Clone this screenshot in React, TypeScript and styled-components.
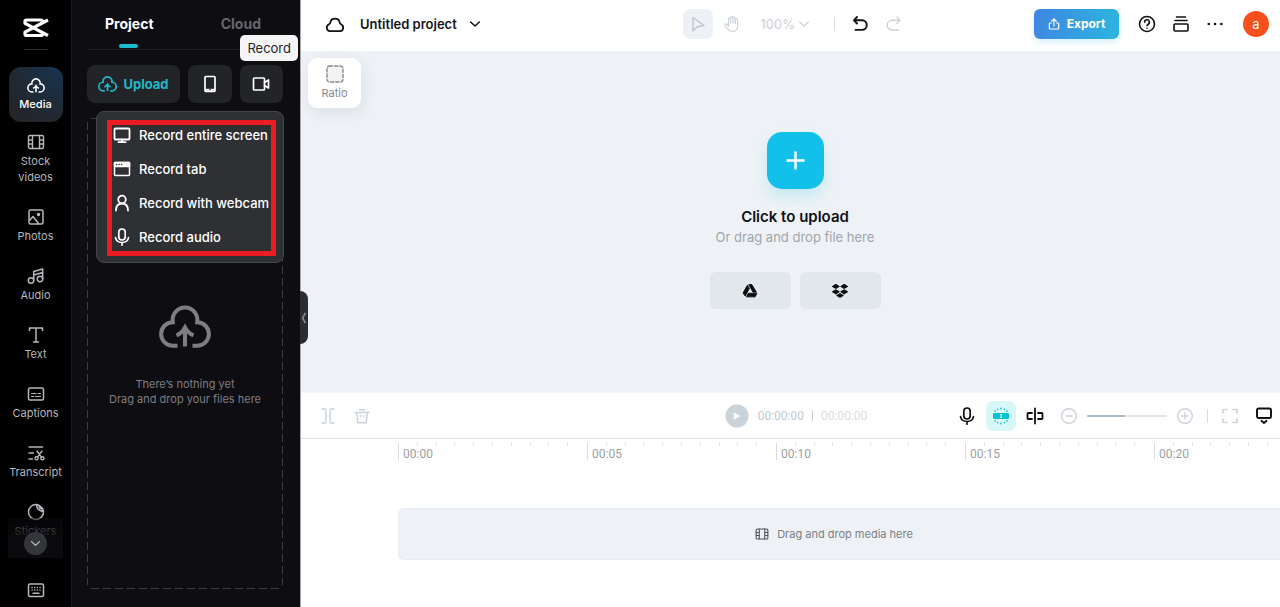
import React from "react";
import styled, { createGlobalStyle, css } from "styled-components";

const GlobalStyle = createGlobalStyle`
  *, *::before, *::after { box-sizing: border-box; }
  body { margin: 0; background: #fff; font-family: Inter, "Liberation Sans", sans-serif; }
  button, select, input { font: inherit; color: inherit; margin: 0; }
  button { border: 0; padding: 0; background: none; cursor: pointer; }
  ul { list-style: none; margin: 0; padding: 0; }
  h1, p { margin: 0; }
  svg { display: block; flex: none; }
`;

/* ---------- icons ---------- */

type IconProps = { size?: number; stroke?: number; children?: React.ReactNode };

const Icon = ({ size = 18, stroke = 1.5, children }: IconProps) => (
  <svg
    width={size}
    height={size}
    viewBox="0 0 18 18"
    fill="none"
    stroke="currentColor"
    strokeWidth={stroke}
    strokeLinecap="round"
    strokeLinejoin="round"
    aria-hidden="true"
  >
    {children}
  </svg>
);

const CloudUpload = ({ width, stroke }: { width: number; stroke: number }) => (
  <svg
    width={width}
    height={Math.round((width * 44) / 52)}
    viewBox="0 0 52 44"
    fill="none"
    stroke="currentColor"
    strokeWidth={stroke}
    aria-hidden="true"
  >
    <path d="M18.5 40.8H14A11.8 11.8 0 0 1 13.8 17.2A12.4 12.4 0 1 1 38.2 17.2A11.8 11.8 0 0 1 38 40.8H33.5" />
    <path d="M26 41.500V23M17.500 30.500Q23 28 26 22.500Q29 28 34.500 30.500" />
  </svg>
);

const Logo = () => (
  <svg width="26" height="20" viewBox="0 0 26 20" fill="none" stroke="#fff" strokeWidth="3.200" strokeLinejoin="round" aria-hidden="true">
    <path d="M19.500 5.500V3.500Q19.500 2 18 2H3.500Q2 2 2 3.500V5.300L25 17.500" />
    <path d="M19.500 14V16Q19.500 17.500 18 17.500H3.500Q2 17.500 2 16V14.200L25 2" />
  </svg>
);

const Film = ({ size = 18 }: { size?: number }) => (
  <Icon size={size} stroke={1.4}>
    <rect x="1.500" y="2.500" width="15" height="13" rx="1.500" />
    <path d="M5.500 2.500v13M12.500 2.500v13M1.500 7h4M1.500 11h4M12.500 7h4M12.500 11h4" />
  </Icon>
);
const Photo = () => (
  <Icon>
    <rect x="2" y="2" width="14" height="14" rx="1.500" />
    <path d="M2.500 12.500L6 8.500L11.500 15.500" />
    <circle cx="11.500" cy="6.500" r="1" fill="currentColor" />
  </Icon>
);
const Music = () => (
  <Icon>
    <circle cx="4" cy="13.500" r="2.700" />
    <circle cx="13" cy="12" r="2.700" />
    <path d="M6.700 13.500V4.500L15.700 2V12M6.700 8L15.700 5.500" />
  </Icon>
);
const TextIcon = () => (
  <Icon>
    <path d="M2.500 4.500V2H15.500V4.500M9 2V16M6.500 16H11.500" />
  </Icon>
);
const CaptionsIcon = () => (
  <Icon>
    <rect x="1.500" y="3" width="15" height="12" rx="1.500" />
    <path d="M4.500 8.500h4.500M11 8.500h2.500M4.500 11.500h2M8.500 11.500h5" strokeWidth="1.200" />
  </Icon>
);
const TranscriptIcon = () => (
  <Icon stroke={1.4}>
    <path d="M2 3H15.500M2 9H6.500M2 15H5.500M10 7L14.500 13.200M15 7L10.500 13.200" />
    <circle cx="9.600" cy="14.300" r="1.600" />
    <circle cx="15.400" cy="14.300" r="1.600" />
  </Icon>
);
const Sticker = () => (
  <Icon>
    <path d="M9.500 1.500A7.500 7.500 0 1 0 16.500 8.500Q16 5 13 3Q11.500 1.800 9.500 1.500ZM9.500 1.500Q9.500 7.500 16.500 8.500M12 2.500Q12 5.500 15.500 6" />
  </Icon>
);
const Keyboard = () => (
  <Icon>
    <rect x="1.500" y="3" width="15" height="12.500" rx="1.500" />
    <path d="M5 6.500h.2M7.700 6.500h.2M10.300 6.500h.2M13 6.500h.1M5 9h.2M7.700 9h.2M10.300 9h.2M13 9h.1M6 12.200h6" strokeWidth="1.400" />
  </Icon>
);
const Phone = () => (
  <Icon stroke={1.7}>
    <rect x="4" y="1.500" width="10" height="15" rx="1" />
    <path d="M4 13.800h10v2H4z" fill="currentColor" stroke="none" />
    <path d="M8.500 14.300h1" stroke="#232428" strokeWidth="1" />
  </Icon>
);
const Camera = () => (
  <Icon stroke={1.7}>
    <rect x="1.500" y="3" width="11" height="12" rx="1" />
    <path d="M12.500 7.500L16.500 5V13L12.500 10.500" />
  </Icon>
);
const Monitor = () => (
  <Icon stroke={1.8}>
    <rect x="1.500" y="2.500" width="15" height="11" rx="1" />
    <path d="M9 13.500V16M5.500 16.200H12.500" />
  </Icon>
);
const TabIcon = () => (
  <Icon>
    <rect x="1.500" y="2.500" width="15" height="13" rx="1" />
    <path d="M1.500 2.500h15v4h-15z" fill="currentColor" />
    <path d="M3.500 4.500h.2M6 4.500h.2M8.500 4.500h.2" stroke="#2f3034" strokeWidth="1.400" />
  </Icon>
);
const Person = () => (
  <Icon stroke={1.8}>
    <circle cx="9" cy="5.500" r="3.800" />
    <path d="M3 16.500C3 11.500 5.500 9.500 9 9.500S15 11.500 15 16.500" />
  </Icon>
);
const Mic = () => (
  <Icon stroke={1.7}>
    <rect x="5.800" y="1" width="6.400" height="11" rx="3.200" />
    <path d="M2.500 9.500C3 13 5.500 14.500 9 14.500S15 13 15.500 9.500M9 14.500V17.200" />
  </Icon>
);
const Chevron = ({ size = 12, stroke = 2 }: { size?: number; stroke?: number }) => (
  <Icon size={size} stroke={stroke}>
    <path d="M2.500 6L9 12L15.500 6" />
  </Icon>
);
const CloudIcon = () => (
  <Icon size={20} stroke={1.6}>
    <path d="M4.500 15.500A3.300 3.300 0 0 1 3.600 9.200Q4.600 8.800 4.800 7.500A4.300 4.300 0 0 1 13.200 7.500Q13.400 8.800 14.400 9.200A3.300 3.300 0 0 1 13.500 15.500Z" />
  </Icon>
);
const Cursor = () => (
  <Icon stroke={1.4}>
    <path d="M4 2.500V16L8 12L15 10.500Z" />
  </Icon>
);
const Hand = () => (
  <Icon stroke={1.2}>
    <path d="M5.500 10.500V4.200a1.100 1.100 0 0 1 2.200 0V8M7.700 8V2.700a1.100 1.100 0 0 1 2.300 0V8M10 8V3.200a1.100 1.100 0 0 1 2.300 0V8.500M12.300 8.500V5a1.100 1.100 0 0 1 2.300 0V11C14.600 14.500 12.500 16.500 9.500 16.500C7 16.500 5.800 15.500 4.500 13.800L2 10.500C1.300 9.300 2.800 8.300 3.800 9.200L5.500 11" />
  </Icon>
);
const Undo = () => (
  <Icon stroke={1.9}>
    <path d="M6 2L3 5.300L6 8.500M3.500 5.300H11A4.800 4.800 0 0 1 11 14.900H4.500" />
  </Icon>
);
const Redo = () => (
  <Icon stroke={1.5}>
    <path d="M12 2L15 5.300L12 8.500M14.500 5.300H7A4.800 4.800 0 0 0 7 14.900H13.500" />
  </Icon>
);
const Share = () => (
  <Icon size={12} stroke={1.8}>
    <path d="M5 7.500H3Q2 7.500 2 8.500V15.500Q2 16.500 3 16.500H15Q16 16.500 16 15.500V8.500Q16 7.500 15 7.500H13M9 12V1.500M5.500 4.800L9 1.500L12.500 4.800" />
  </Icon>
);
const Help = () => (
  <Icon stroke={1.6}>
    <circle cx="9" cy="9" r="7.500" />
    <path d="M6.600 7.200A2.400 2.400 0 1 1 10.200 9.200Q9 9.800 9 10.800M9 13.200v.1" />
  </Icon>
);
const Stack = () => (
  <Icon stroke={1.6}>
    <path d="M4.500 2H13.500M3 5.500H15" />
    <rect x="2" y="9" width="14" height="7" rx="1" />
  </Icon>
);
const Dots = () => (
  <Icon>
    <path d="M2.700 9h.1M9 9h.1M15.300 9h.1" strokeWidth="2.400" />
  </Icon>
);
const Ratio = () => (
  <Icon stroke={1.4}>
    <rect x="1" y="1" width="16" height="16" rx="2.500" fill="#f1f3f5" strokeDasharray="3.200 2" />
  </Icon>
);
const Plus = () => (
  <svg width="19" height="19" viewBox="0 0 20 20" stroke="#fff" strokeWidth="2.600" aria-hidden="true">
    <path d="M10 .5V19.500M.5 10H19.500" />
  </svg>
);
const Drive = () => (
  <svg width="16" height="16" viewBox="0 0 18 18" fill="#0b0c0f" stroke="#0b0c0f" strokeWidth="1" strokeLinejoin="round" aria-hidden="true">
    <path d="M6 2.500L8.200 6.200L3.600 14.700L1.200 11.200Z" />
    <path d="M7.500 1.800H11L16.200 10.300H12.400Z" />
    <path d="M7 11.600H16.700L14.800 15.600H5Z" />
  </svg>
);
const Dropbox = () => (
  <svg width="18" height="16" viewBox="0 0 18 16" fill="#0b0c0f" aria-hidden="true">
    <path d="M4.800 .8L9 3.400L4.800 6L.6 3.400ZM13.200 .8L17.400 3.400L13.200 6L9 3.400ZM4.800 6.200L9 8.800L4.800 11.400L.6 8.800ZM13.200 6.200L17.400 8.800L13.200 11.400L9 8.800ZM9 9.900L13 12.400L9 15L5 12.400Z" />
  </svg>
);
const SplitBrackets = () => (
  <Icon stroke={1.5}>
    <path d="M3 2H5.500Q7 2 7 3.500V14.500Q7 16 5.500 16H3M15 2H12.500Q11 2 11 3.500V14.500Q11 16 12.500 16H15" />
  </Icon>
);
const Trash = () => (
  <Icon stroke={1.5}>
    <path d="M2 5.500H16M6.500 2.800H11.500M3.800 6L4.800 15.800H13.200L14.200 6M7.500 8.500V9.500M10.500 8.500V9.500" />
  </Icon>
);
const PlayIcon = () => (
  <svg width="24" height="24" viewBox="0 0 24 24" aria-hidden="true">
    <circle cx="12" cy="12" r="11.500" fill="#cad2da" />
    <path d="M9.200 9L14.800 12L9.200 15Z" fill="#fff" stroke="#fff" strokeLinejoin="round" />
  </svg>
);
const Snap = () => (
  <Icon stroke={1.4}>
    <rect x="1" y="6" width="16" height="6" rx="1" fill="currentColor" stroke="none" />
    <path d="M9 7.500v3M8.300 7.500h1.400M8.300 10.500h1.400" stroke="#d8f7f8" strokeWidth="1" />
    <path d="M9 1.300v.5M5.600 2.200l.2.400M12.400 2.200l-.2.400M3 4l.2.200M15 4l-.2.200M9 16.700v-.5M5.600 15.800l.2-.4M12.400 15.800l-.2-.4M3 14l.2-.2M15 14l-.2-.2" />
  </Icon>
);
const SplitClip = () => (
  <Icon stroke={1.8}>
    <path d="M9 1.500V16.500M6 6H2.200Q1.500 6 1.500 6.700V11.300Q1.500 12 2.200 12H6M12 6H15.800Q16.500 6 16.500 6.700V11.300Q16.500 12 15.800 12H12" />
  </Icon>
);
const ZoomOut = () => (
  <Icon stroke={1.4}>
    <circle cx="9" cy="9" r="7.300" />
    <path d="M6 9H12" />
  </Icon>
);
const ZoomIn = () => (
  <Icon stroke={1.4}>
    <circle cx="9" cy="9" r="7.300" />
    <path d="M6 9H12M9 6V12" />
  </Icon>
);
const Fullscreen = () => (
  <Icon stroke={1.6}>
    <path d="M2 6V2.500H6M12 2.500H16V6M16 12V15.500H12M6 15.500H2V12" />
  </Icon>
);
const Dock = () => (
  <Icon stroke={1.9}>
    <rect x="2" y="1.500" width="14" height="9.500" rx="1.500" />
    <path d="M6.500 13.800L9 16L11.500 13.800" />
  </Icon>
);

/* ---------- page ---------- */

const Page = styled.div`
  display: flex;
  height: 100vh;
  min-height: 560px;
  overflow: hidden;
`;

/* ---------- side navigation ---------- */

const Nav = styled.nav`
  flex: none;
  width: 72px;
  display: flex;
  flex-direction: column;
  align-items: center;
  background: #000;
  border-right: 1px solid #1c1c20;
`;
const Brand = styled.a`
  display: flex;
  justify-content: center;
  width: 24px;
  height: 50px;
  padding-top: 18px;
  border-bottom: 1px solid #2a2a2e;
`;
const NavList = styled.ul`
  position: relative;
  flex: 1;
  width: 100%;
  min-height: 0;
  overflow: hidden;
  padding-top: 17px;
  display: flex;
  flex-direction: column;
  align-items: center;
  gap: 23px;
`;
const NavButton = styled.button<{ $active?: boolean }>`
  display: flex;
  flex-direction: column;
  align-items: center;
  gap: 2px;
  width: 64px;
  font-size: 11px;
  line-height: 16px;
  color: #b4b7bb;
  ${(p) =>
    p.$active &&
    css`
      gap: 3px;
      width: 54px;
      height: 55px;
      padding-top: 11px;
      margin-bottom: -12px;
      border-radius: 12px;
      color: #fff;
      font-weight: 500;
      background: radial-gradient(circle at 100% 0, #173450 0%, #232528 85%);
    `}
`;
const NavLabel = styled.span`
  max-width: 56px;
`;
const NavMore = styled.div`
  position: absolute;
  left: 8px;
  right: 8px;
  bottom: 0;
  height: 40px;
  display: flex;
  justify-content: center;
  align-items: flex-end;
  padding-bottom: 3px;
  background: linear-gradient(rgba(10, 10, 14, 0.5), #0b0b0f 60%);
`;
const MoreButton = styled.button`
  display: grid;
  place-items: center;
  width: 23px;
  height: 23px;
  border-radius: 50%;
  background: #35363a;
  color: #c3c5c8;
`;
const NavFooter = styled.button`
  flex: none;
  display: grid;
  place-items: center;
  width: 100%;
  height: 49px;
  padding-top: 14px;
  color: #b4b7bb;
`;

/* ---------- media panel ---------- */

const Panel = styled.aside`
  position: relative;
  flex: none;
  width: 229px;
  display: flex;
  flex-direction: column;
  padding: 0 17px 18px 15px;
  background: #0e0d12;
  border-right: 1px solid #a9a9ae;
`;
const Tabs = styled.div`
  flex: none;
  display: flex;
  justify-content: space-between;
  height: 50px;
  padding: 0 22px 0 18px;
  border-bottom: 1px solid #222227;
`;
const Tab = styled.button<{ $active?: boolean }>`
  position: relative;
  height: 48px;
  font-size: 14px;
  line-height: 20px;
  font-weight: 700;
  color: ${(p) => (p.$active ? "#fff" : "#66666b")};
  ${(p) =>
    p.$active &&
    css`
      &::after {
        content: "";
        position: absolute;
        left: calc(50% - 10px);
        bottom: 0;
        width: 19px;
        height: 4px;
        border-radius: 2px;
        background: #1bbcd0;
      }
    `}
`;
const Actions = styled.div`
  position: relative;
  flex: none;
  display: flex;
  gap: 8px;
  margin-top: 15px;
`;
const Action = styled.button<{ $wide?: boolean }>`
  flex: ${(p) => (p.$wide ? "none" : "1")};
  display: flex;
  align-items: center;
  justify-content: center;
  gap: 6px;
  width: ${(p) => (p.$wide ? "93px" : "auto")};
  height: 38px;
  border-radius: 8px;
  background: #232428;
  font-size: 13px;
  font-weight: 700;
  color: ${(p) => (p.$wide ? "#1fb9c9" : "#fff")};
`;
const Tooltip = styled.div`
  position: absolute;
  z-index: 3;
  right: -15px;
  bottom: calc(100% + 4px);
  padding: 4px 7px;
  border-radius: 5px;
  background: #f5f5f5;
  color: #232428;
  font-size: 13px;
  line-height: 18px;
`;
const Menu = styled.div`
  position: absolute;
  z-index: 2;
  top: calc(100% + 8px);
  right: -1px;
  width: 188px;
  padding: 8px 7px 6px 10px;
  border: 1px solid #45464b;
  border-radius: 8px;
  background: #2f3034;
`;
const MenuList = styled.ul`
  display: flex;
  flex-direction: column;
  gap: 14px;
  padding: 0 0 4px 1px;
  border: 5px solid #ec1c24;
`;
const MenuItem = styled.button`
  display: flex;
  align-items: center;
  gap: 8px;
  height: 20px;
  font-size: 13px;
  font-weight: 500;
  white-space: nowrap;
  color: #fff;
`;
const DropZone = styled.div`
  --dash: #3b3b40;
  flex: 1;
  display: flex;
  flex-direction: column;
  align-items: center;
  justify-content: center;
  gap: 28px;
  margin-top: 15px;
  padding-top: 4px;
  background-image: repeating-linear-gradient(90deg, var(--dash) 0 8px, transparent 8px 12px),
    repeating-linear-gradient(90deg, var(--dash) 0 8px, transparent 8px 12px),
    repeating-linear-gradient(var(--dash) 0 8px, transparent 8px 12px),
    repeating-linear-gradient(var(--dash) 0 8px, transparent 8px 12px);
  background-size: calc(100% - 8px) 1px, calc(100% - 8px) 1px, 1px calc(100% - 8px), 1px calc(100% - 8px);
  background-position: center top, center bottom, left center, right center;
  background-repeat: no-repeat;
  color: #7e7d82;
  font-size: 11px;
  line-height: 15px;
  text-align: center;
`;
const CollapseHandle = styled.button`
  position: absolute;
  z-index: 2;
  top: 48%;
  left: 100%;
  width: 8px;
  height: 53px;
  display: grid;
  place-items: center;
  border-radius: 0 8px 8px 0;
  background: #2b2d30;
  color: #8a8d91;
`;

/* ---------- workspace ---------- */

const Main = styled.main`
  flex: 1;
  min-width: 0;
  display: flex;
  flex-direction: column;
  background: #fff;
`;
const Bar = styled.header<{ $timeline?: boolean }>`
  flex: none;
  display: grid;
  grid-template-columns: 1fr auto 1fr;
  align-items: center;
  height: ${(p) => (p.$timeline ? "46px" : "51px")};
  padding: ${(p) => (p.$timeline ? "0 1px 0 12px" : "0 11px 4px 21px")};
  border-bottom: ${(p) => (p.$timeline ? "1px solid #dfe2e5" : "0")};
`;
const Group = styled.div<{ $gap?: number; $end?: boolean }>`
  display: flex;
  align-items: center;
  gap: ${(p) => p.$gap ?? 4}px;
  justify-content: ${(p) => (p.$end ? "flex-end" : "flex-start")};
`;
const IconButton = styled.button<{ $tone?: "muted" | "snap" | "selected"; $width?: number }>`
  display: grid;
  place-items: center;
  width: ${(p) => p.$width ?? 30}px;
  height: 30px;
  border-radius: 7px;
  color: #0f1014;
  ${(p) => p.$tone === "muted" && "color: #ccd2d9;"}
  ${(p) => p.$tone === "selected" && "color: #bfc5cc; background: #edf1f5;"}
  ${(p) => p.$tone === "snap" && "color: #08c3d4; background: #d8f7f8;"}
`;
const ProjectTitle = styled.button`
  display: flex;
  align-items: center;
  gap: 12px;
  font-size: 13px;
  font-weight: 600;
  color: #14151a;
`;
const ZoomSelect = styled.label`
  position: relative;
  display: flex;
  align-items: center;
  margin: 0 14px 0 10px;
  color: #ccd0d5;
  svg {
    position: absolute;
    right: 0;
    pointer-events: none;
  }
`;
const Select = styled.select`
  appearance: none;
  width: 49px;
  padding: 0;
  border: 0;
  background: none;
  font-size: 13px;
`;
const Divider = styled.span<{ $space: number }>`
  width: 1px;
  height: 14px;
  margin: 0 ${(p) => p.$space}px;
  background: #d9dde1;
`;
const ExportButton = styled.button`
  display: flex;
  align-items: center;
  justify-content: center;
  gap: 7px;
  width: 85px;
  height: 30px;
  border-radius: 6px;
  background: linear-gradient(100deg, #3f86e3, #2bb6dd);
  box-shadow: 0 3px 6px rgba(43, 182, 221, 0.2);
  color: #fff;
  font-size: 12px;
  font-weight: 700;
`;
const Avatar = styled.button`
  width: 26px;
  height: 26px;
  border-radius: 50%;
  background: #f8501c;
  color: #fff;
  font-size: 13px;
`;

const Stage = styled.section`
  position: relative;
  flex: 1;
  display: flex;
  flex-direction: column;
  align-items: center;
  justify-content: center;
  padding: 0 0 2px 9px;
  background: #eef2f6;
`;
const RatioButton = styled.button`
  position: absolute;
  top: 7px;
  left: 7px;
  width: 53px;
  height: 50px;
  display: flex;
  flex-direction: column;
  align-items: center;
  gap: 2px;
  padding-top: 7px;
  border-radius: 9px;
  background: #fff;
  box-shadow: 2px 4px 14px rgba(60, 70, 90, 0.1);
  color: #85888e;
  font-size: 11px;
  line-height: 16px;
`;
const AddButton = styled.button`
  display: grid;
  place-items: center;
  width: 57px;
  height: 57px;
  margin-bottom: 18px;
  border-radius: 15px;
  background: #13c0ea;
  box-shadow: 0 8px 14px rgba(19, 192, 234, 0.18);
`;
const StageTitle = styled.h1`
  font-size: 15px;
  line-height: 20px;
  font-weight: 600;
  color: #0f1014;
`;
const StageText = styled.p`
  font-size: 13px;
  line-height: 20px;
  color: #a0a5ac;
`;
const Sources = styled.div`
  display: flex;
  gap: 9px;
  margin-top: 25px;
`;
const Source = styled.button`
  display: grid;
  place-items: center;
  width: 81px;
  height: 37px;
  border-radius: 6px;
  background: #e1e7ea;
`;

/* ---------- timeline ---------- */

const Timeline = styled.section`
  flex: none;
  border-top: 1px solid #f4f6f8;
`;
const PlayButton = styled.button`
  margin-right: 5px;
`;
const Time = styled.span<{ $faint?: boolean }>`
  font-family: Roboto, "Liberation Sans", sans-serif;
  font-size: 12px;
  color: ${(p) => (p.$faint ? "#d9dde2" : "#c3cad2")};
`;
const TimeDivider = styled.span`
  width: 1px;
  height: 11px;
  margin: 0 4px;
  background: #c3cad2;
`;
const Slider = styled.input`
  appearance: none;
  width: 80px;
  height: 2px;
  margin: 0 -1px;
  border-radius: 1px;
  background: linear-gradient(90deg, #a9bcc6 48%, #e1e5e9 48%);
  &::-webkit-slider-thumb {
    appearance: none;
    width: 0;
    height: 0;
  }
`;
const Ruler = styled.div`
  display: flex;
  height: 69px;
  padding: 4px 0 0 97px;
  overflow: hidden;
`;
const Second = styled.div`
  position: relative;
  flex: none;
  display: grid;
  grid-template-columns: repeat(10, 1fr);
  width: 189px;
  height: 17px;
  border-left: 1px solid #d9dce0;
`;
const Tick = styled.i`
  height: 3px;
  border-right: 1px solid #dde1e5;
`;
const SecondLabel = styled.span`
  position: absolute;
  left: 4px;
  top: 4px;
  font-family: Roboto, "Liberation Sans", sans-serif;
  font-size: 12px;
  line-height: 14px;
  color: #9b9fa5;
`;
const Track = styled.div`
  display: flex;
  align-items: center;
  justify-content: center;
  gap: 8px;
  height: 52px;
  margin: 0 0 47px 97px;
  padding-right: 11px;
  border: 1px solid #e8ecef;
  border-right: 0;
  border-radius: 6px 0 0 6px;
  background: #eef1f5;
  font-size: 11px;
  color: #7c7f85;
  svg {
    color: #505359;
  }
`;

const navItems: { label: string; icon: React.ReactNode; active?: boolean }[] = [
  { label: "Media", icon: <CloudUpload width={18} stroke={4.6} />, active: true },
  { label: "Stock videos", icon: <Film /> },
  { label: "Photos", icon: <Photo /> },
  { label: "Audio", icon: <Music /> },
  { label: "Text", icon: <TextIcon /> },
  { label: "Captions", icon: <CaptionsIcon /> },
  { label: "Transcript", icon: <TranscriptIcon /> },
  { label: "Stickers", icon: <Sticker /> },
];

const recordOptions = [
  { label: "Record entire screen", icon: <Monitor /> },
  { label: "Record tab", icon: <TabIcon /> },
  { label: "Record with webcam", icon: <Person /> },
  { label: "Record audio", icon: <Mic /> },
];

const rulerMarks = ["00:00", "00:05", "00:10", "00:15", "00:20"];

export default function App() {
  return (
    <>
      <GlobalStyle />
      <Page>
        <Nav>
          <Brand href="#" aria-label="Home">
            <Logo />
          </Brand>
          <NavList>
            {navItems.map((item) => (
              <li key={item.label}>
                <NavButton $active={item.active}>
                  {item.icon}
                  <NavLabel>{item.label}</NavLabel>
                </NavButton>
              </li>
            ))}
            <NavMore as="li">
              <MoreButton aria-label="More tools">
                <Chevron size={11} />
              </MoreButton>
            </NavMore>
          </NavList>
          <NavFooter aria-label="Keyboard shortcuts">
            <Keyboard />
          </NavFooter>
        </Nav>

        <Panel>
          <Tabs>
            <Tab $active>Project</Tab>
            <Tab>Cloud</Tab>
          </Tabs>
          <Actions>
            <Action $wide>
              <CloudUpload width={19} stroke={4.6} />
              Upload
            </Action>
            <Action aria-label="Upload from phone">
              <Phone />
            </Action>
            <Action aria-label="Record" aria-expanded="true">
              <Camera />
            </Action>
            <Tooltip role="tooltip">Record</Tooltip>
            <Menu>
              <MenuList>
                {recordOptions.map((option) => (
                  <li key={option.label}>
                    <MenuItem>
                      {option.icon}
                      {option.label}
                    </MenuItem>
                  </li>
                ))}
              </MenuList>
            </Menu>
          </Actions>
          <DropZone>
            <CloudUpload width={52} stroke={4} />
            <p>
              There’s nothing yet
              <br />
              Drag and drop your files here
            </p>
          </DropZone>
          <CollapseHandle aria-label="Collapse panel">
            <svg width="6" height="12" viewBox="0 0 6 12" fill="none" stroke="currentColor" strokeWidth="1.500">
              <path d="M4.500 1L1.500 6L4.500 11" />
            </svg>
          </CollapseHandle>
        </Panel>

        <Main>
          <Bar>
            <Group $gap={12}>
              <IconButton $width={26} aria-label="Saved to cloud">
                <CloudIcon />
              </IconButton>
              <ProjectTitle>
                Untitled project
                <Chevron size={12} stroke={2.4} />
              </ProjectTitle>
            </Group>
            <Group>
              <IconButton $tone="selected" aria-label="Select">
                <Cursor />
              </IconButton>
              <IconButton $tone="muted" aria-label="Pan">
                <Hand />
              </IconButton>
              <ZoomSelect>
                <Select aria-label="Zoom level" defaultValue="100%">
                  <option>100%</option>
                </Select>
                <Chevron size={12} stroke={1.8} />
              </ZoomSelect>
              <Divider $space={6} />
              <IconButton aria-label="Undo">
                <Undo />
              </IconButton>
              <IconButton $tone="muted" aria-label="Redo">
                <Redo />
              </IconButton>
            </Group>
            <Group $end $gap={19}>
              <ExportButton>
                <Share />
                Export
              </ExportButton>
              <Group $gap={16}>
                <IconButton $width={18} aria-label="Help">
                  <Help />
                </IconButton>
                <IconButton $width={18} aria-label="Tasks">
                  <Stack />
                </IconButton>
                <IconButton $width={18} aria-label="More">
                  <Dots />
                </IconButton>
              </Group>
              <Avatar>a</Avatar>
            </Group>
          </Bar>

          <Stage>
            <RatioButton>
              <Ratio />
              Ratio
            </RatioButton>
            <AddButton aria-label="Add media">
              <Plus />
            </AddButton>
            <StageTitle>Click to upload</StageTitle>
            <StageText>Or drag and drop file here</StageText>
            <Sources>
              <Source aria-label="Google Drive">
                <Drive />
              </Source>
              <Source aria-label="Dropbox">
                <Dropbox />
              </Source>
            </Sources>
          </Stage>

          <Timeline>
            <Bar as="div" $timeline>
              <Group>
                <IconButton $tone="muted" aria-label="Split">
                  <SplitBrackets />
                </IconButton>
                <IconButton $tone="muted" aria-label="Delete">
                  <Trash />
                </IconButton>
              </Group>
              <Group>
                <PlayButton aria-label="Play">
                  <PlayIcon />
                </PlayButton>
                <Time>00:00:00</Time>
                <TimeDivider />
                <Time $faint>00:00:00</Time>
              </Group>
              <Group $end>
                <IconButton aria-label="Voiceover">
                  <Mic />
                </IconButton>
                <IconButton $tone="snap" aria-label="Snapping">
                  <Snap />
                </IconButton>
                <IconButton aria-label="Split clip">
                  <SplitClip />
                </IconButton>
                <IconButton $tone="muted" aria-label="Zoom out">
                  <ZoomOut />
                </IconButton>
                <Slider type="range" aria-label="Timeline zoom" />
                <IconButton $tone="muted" aria-label="Zoom in">
                  <ZoomIn />
                </IconButton>
                <Divider $space={3} />
                <IconButton $tone="muted" aria-label="Fit timeline">
                  <Fullscreen />
                </IconButton>
                <IconButton aria-label="Dock preview">
                  <Dock />
                </IconButton>
              </Group>
            </Bar>
            <Ruler>
              {rulerMarks.map((mark) => (
                <Second key={mark}>
                  {Array.from({ length: 9 }, (_, i) => (
                    <Tick key={i} />
                  ))}
                  <SecondLabel>{mark}</SecondLabel>
                </Second>
              ))}
            </Ruler>
            <Track>
              <Film size={14} />
              Drag and drop media here
            </Track>
          </Timeline>
        </Main>
      </Page>
    </>
  );
}
